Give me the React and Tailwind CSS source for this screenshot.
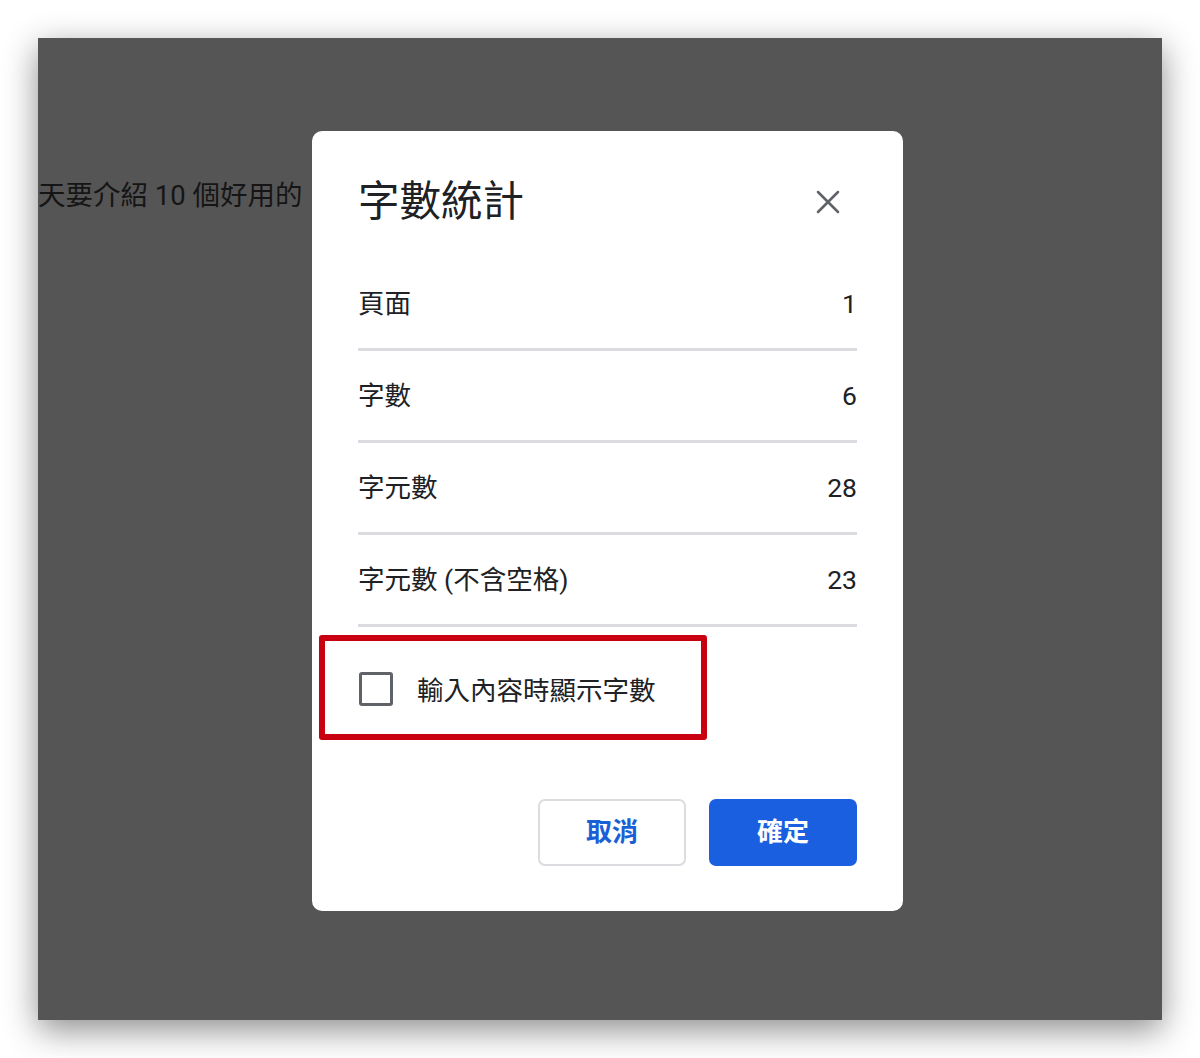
import { X } from "lucide-react";

const stats = [
  { label: "頁面", value: "1" },
  { label: "字數", value: "6" },
  { label: "字元數", value: "28" },
  { label: "字元數 (不含空格)", value: "23" },
];

const WordCountDialog = () => {
  return (
    <div className="absolute left-[274px] top-[93px] w-[591px] rounded-[10px] bg-white px-[46px] pt-[47px] pb-[45px]">
      <div className="flex items-center justify-between">
        <h2 className="text-[41.5px] leading-[48px] font-normal text-[#202124]">
          字數統計
        </h2>
        <button className="mr-[9px] text-[#5f6368]">
          <X size={40} strokeWidth={1.55} />
        </button>
      </div>

      <div className="mt-[33px]">
        {stats.map((row) => (
          <div
            key={row.label}
            className="flex items-center justify-between border-b-[3px] border-[#dadce0] pt-[29px] pb-[28px] text-[26.5px] leading-[32px] text-[#202124]"
          >
            <span>{row.label}</span>
            <span>{row.value}</span>
          </div>
        ))}
      </div>

      <div className="relative mt-[44px] flex items-center">
        <div className="pointer-events-none absolute -left-[39px] -top-[36px] h-[105px] w-[388px] rounded-[3px] border-[6px] border-[#c8000f]" />
        <div className="ml-[1px] h-[34px] w-[34px] rounded-[3px] border-[3px] border-[#5f6368]" />
        <span className="ml-[24px] mt-[4px] text-[26.5px] leading-[32px] text-[#202124]">
          輸入內容時顯示字數
        </span>
      </div>

      <div className="mt-[92px] flex justify-end gap-[23px]">
        <button className="h-[67px] w-[148px] rounded-[7px] border-2 border-[#dadce0] bg-white text-[26px] font-bold text-[#1b5fd6]">
          取消
        </button>
        <button className="h-[67px] w-[148px] rounded-[7px] bg-[#1a5fe0] text-[26px] font-bold text-white">
          確定
        </button>
      </div>
    </div>
  );
};

export default function App() {
  return (
    <div className="h-[1058px] w-[1200px] bg-white px-[38px] pt-[38px] font-['Roboto','Noto_Sans_CJK_TC',sans-serif]">
      <div className="relative h-[982px] w-[1124px] bg-[#555555] shadow-[0_10px_32px_rgba(0,0,0,0.45)]">
        <div className="overflow-hidden pt-[142px]">
          <p className="whitespace-nowrap text-[27.5px] leading-[32px] text-[#151515]">
            天要介紹 10 個好用的
          </p>
        </div>
        <WordCountDialog />
      </div>
    </div>
  );
}
